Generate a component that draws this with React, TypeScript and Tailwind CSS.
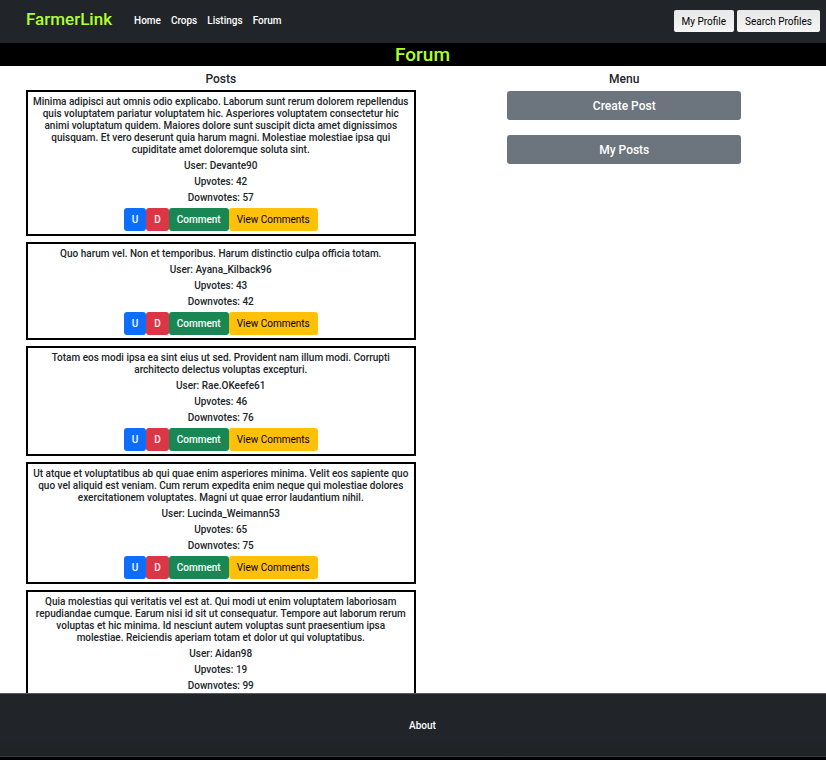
import React from "react";

type Post = { text: string; user: string; up: number; down: number };

const posts: Post[] = [
  {
    text: "Minima adipisci aut omnis odio explicabo. Laborum sunt rerum dolorem repellendus quis voluptatem pariatur voluptatem hic. Asperiores voluptatem consectetur hic animi voluptatum quidem. Maiores dolore sunt suscipit dicta amet dignissimos quisquam. Et vero deserunt quia harum magni. Molestiae molestiae ipsa qui cupiditate amet doloremque soluta sint.",
    user: "Devante90",
    up: 42,
    down: 57,
  },
  {
    text: "Quo harum vel. Non et temporibus. Harum distinctio culpa officia totam.",
    user: "Ayana_Kilback96",
    up: 43,
    down: 42,
  },
  {
    text: "Totam eos modi ipsa ea sint eius ut sed. Provident nam illum modi. Corrupti architecto delectus voluptas excepturi.",
    user: "Rae.OKeefe61",
    up: 46,
    down: 76,
  },
  {
    text: "Ut atque et voluptatibus ab qui quae enim asperiores minima. Velit eos sapiente quo quo vel aliquid est veniam. Cum rerum expedita enim neque qui molestiae dolores exercitationem voluptates. Magni ut quae error laudantium nihil.",
    user: "Lucinda_Weimann53",
    up: 65,
    down: 75,
  },
  {
    text: "Quia molestias qui veritatis vel est at. Qui modi ut enim voluptatem laboriosam repudiandae cumque. Earum nisi id sit ut consequatur. Tempore aut laborum rerum voluptas et hic minima. Id nesciunt autem voluptas sunt praesentium ipsa molestiae. Reiciendis aperiam totam et dolor ut qui voluptatibus.",
    user: "Aidan98",
    up: 19,
    down: 99,
  },
];

const navLinks = ["Home", "Crops", "Listings", "Forum"];

function PostCard({ post }: { post: Post }) {
  return (
    <article className="border-2 border-black px-1 pt-1 pb-[3px] text-center text-[10px] leading-[12px] font-medium text-[#212529]">
      <div className="flex flex-col gap-1">
        <h3>{post.text}</h3>
        <p>User: {post.user}</p>
        <p>Upvotes: {post.up}</p>
        <p>Downvotes: {post.down}</p>
      </div>
      <div className="mt-1 flex h-[23px] justify-center">
        <button type="button" aria-label="Upvote" className="rounded-[3px] bg-[#0d6efd] px-2 text-white">U</button>
        <button type="button" aria-label="Downvote" className="rounded-[3px] bg-[#dc3545] px-2 text-white">D</button>
        <button type="button" className="rounded-[3px] bg-[#198754] px-2 text-white">Comment</button>
        <button type="button" className="rounded-[3px] bg-[#ffc107] px-2 font-normal text-black">View Comments</button>
      </div>
    </article>
  );
}

export default function App() {
  return (
    <div className="flex h-screen flex-col overflow-hidden bg-white font-['Roboto',sans-serif] text-[#212529]">
      <header className="flex h-[43px] shrink-0 items-start bg-[#212529] pr-1.5 pl-[26px]">
        <a href="#" className="pt-2 text-[17px] leading-[22px] font-medium text-[#adff2f]">FarmerLink</a>
        <nav className="ml-[22px] flex gap-2.5 pt-3.5 text-[10px] leading-[14px] font-medium text-white">
          {navLinks.map((label) => (
            <a key={label} href="#">{label}</a>
          ))}
        </nav>
        <div className="ml-auto flex gap-[3px] pt-2.5 text-[10px] text-black">
          <button type="button" className="h-[22px] rounded-[2px] bg-linear-to-b from-[#e8e8e8] to-[#f5f5f5] px-2">My Profile</button>
          <button type="button" className="h-[22px] rounded-[2px] bg-linear-to-b from-[#e8e8e8] to-[#f5f5f5] px-2">Search Profiles</button>
        </div>
      </header>
      <h1 className="h-[23px] shrink-0 bg-black pl-[19px] text-center text-[19px] leading-[24px] font-medium text-[#adff2f]">Forum</h1>
      <main className="grid min-h-0 flex-1 grid-cols-2 overflow-y-auto pl-[19px] [scrollbar-width:none]">
        <section className="px-[7px] pt-[5px]">
          <h2 className="text-center text-[12px] leading-[16px] font-medium">Posts</h2>
          <div className="mt-[3px] flex flex-col gap-1.5">
            {posts.map((post) => (
              <PostCard key={post.user} post={post} />
            ))}
          </div>
        </section>
        <section className="flex flex-col items-center px-[7px] pt-[5px]">
          <h2 className="text-[12px] leading-[16px] font-medium">Menu</h2>
          <div className="mt-1 flex w-3/5 flex-col gap-[15px] text-[12px] font-medium text-white">
            <button type="button" className="h-[29px] rounded-[3px] bg-[#6c757d]">Create Post</button>
            <button type="button" className="h-[29px] rounded-[3px] bg-[#6c757d]">My Posts</button>
          </div>
        </section>
      </main>
      <footer className="flex h-[67px] shrink-0 flex-col border-t border-[#595c5f] bg-black">
        <div className="flex h-[63px] items-center justify-center border-b border-[#34383a] bg-linear-to-b from-[#212529] from-70% to-[#1e2224] pt-0.5 pl-[19px]">
          <a href="#" className="text-[10px] leading-[14px] font-medium text-white">About</a>
        </div>
      </footer>
    </div>
  );
}
